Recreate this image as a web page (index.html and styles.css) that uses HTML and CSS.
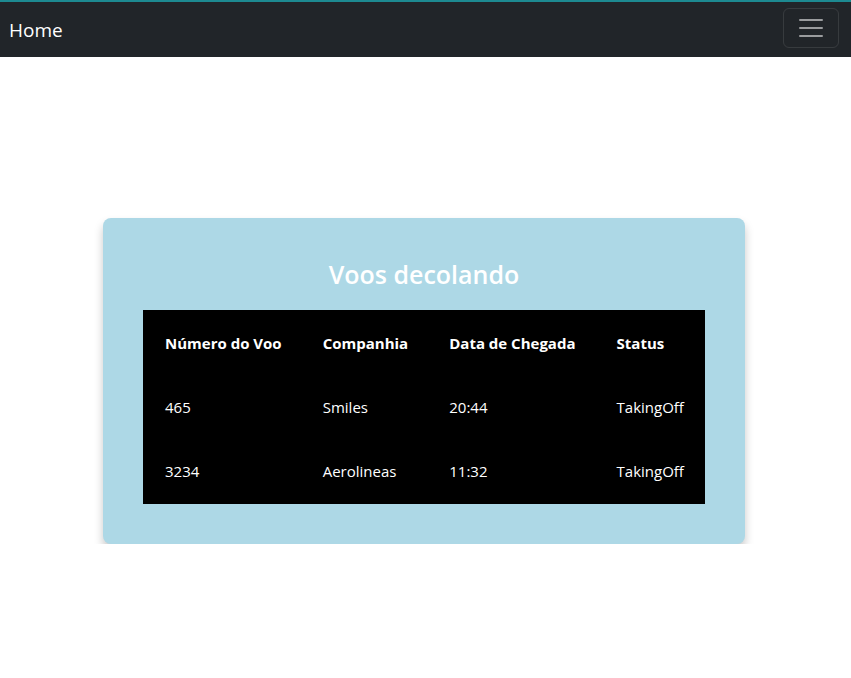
FILE: index.html
```html
<!DOCTYPE html>
<html lang="pt">
<head>
<meta charset="utf-8">
<title>Voos</title>
<link rel="stylesheet" href="styles.css">
</head>
<body>
<nav class="navbar">
  <a class="brand" href="#">Home</a>
  <button class="toggler" type="button" aria-label="Menu">
    <svg width="30" height="30" viewBox="0 0 30 30"><path d="M4 7h22M4 15h22M4 23h22" stroke="rgba(255,255,255,0.55)" stroke-width="2" stroke-linecap="round" fill="none"/></svg>
  </button>
</nav>
<main class="main">
  <section class="card">
    <h2 class="title">Voos decolando</h2>
    <table class="flights">
      <thead>
        <tr><th>Número do Voo</th><th>Companhia</th><th>Data de Chegada</th><th>Status</th></tr>
      </thead>
      <tbody>
        <tr><td>465</td><td>Smiles</td><td>20:44</td><td>TakingOff</td></tr>
        <tr><td>3234</td><td>Aerolineas</td><td>11:32</td><td>TakingOff</td></tr>
      </tbody>
    </table>
  </section>
</main>
</body>
</html>
```
FILE: styles.css
```css
* { box-sizing: border-box; }
body {
  margin: 0;
  font-family: "Open Sans", "Noto Sans", sans-serif;
  background: #fff;
}
.navbar {
  height: 57px;
  background: #212529;
  border-top: 2px solid #1d8a91;
  display: flex;
  align-items: center;
  justify-content: space-between;
  padding: 0 12px 0 9px;
}
.brand {
  color: #fff;
  text-decoration: none;
  font-size: 19px;
  line-height: 1;
  margin-top: 2px;
}
.toggler {
  width: 56px;
  height: 40px;
  border: 1px solid rgba(255,255,255,0.1);
  border-radius: 6px;
  background: transparent;
  display: flex;
  align-items: center;
  justify-content: center;
  padding: 0;
  margin-top: -3px;
}
.toggler svg { display: block; }
.main {
  padding-top: 161px;
  display: flex;
  justify-content: center;
}
.card {
  width: 642px;
  margin-left: -3px;
  background: #add8e6;
  border-radius: 8px;
  padding: 40px;
  box-shadow: 0 6px 10px rgba(0,0,0,0.22);
}
.title {
  margin: 0 0 20px;
  text-align: center;
  color: #fff;
  font-size: 25px;
  font-weight: 600;
  line-height: 32px;
}
.flights {
  width: 100%;
  background: #000;
  color: #fff;
  border-spacing: 2px;
  font-size: 15px;
}
.flights th, .flights td {
  text-align: left;
  padding: 20px 19px 20px 20px;
  line-height: 22px;
  white-space: nowrap;
}
.flights th { font-weight: 700; }
.flights td { font-weight: 400; }
```
